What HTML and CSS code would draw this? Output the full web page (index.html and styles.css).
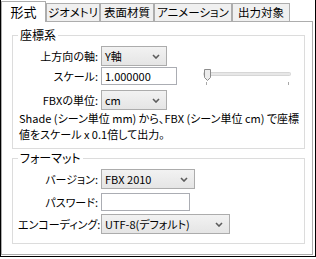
FILE: index.html
```html
<!DOCTYPE html>
<html lang="ja">
<head>
<meta charset="UTF-8">
<title>エクスポート設定</title>
<link rel="stylesheet" href="styles.css">
</head>
<body>
<div class="window">
	<div class="tabs">
		<div class="tab active t-form">形式</div>
		<div class="tab t-geo">ジオメトリ</div>
		<div class="tab t-mat">表面材質</div>
		<div class="tab t-anim">アニメーション</div>
		<div class="tab t-out">出力対象</div>
	</div>
	<div class="panel">
		<fieldset class="group coords">
			<legend>座標系</legend>
			<div class="row r-axis">
				<span class="label">上方向の軸:</span>
				<div class="select w-short"><span>Y軸</span><svg class="chev" width="8" height="5" viewBox="0 0 8 5"><polyline points="1,1 4,4 7,1"/></svg></div>
			</div>
			<div class="row r-scale">
				<span class="label">スケール:</span>
				<div class="field w-scale">1.000000</div>
				<svg class="slider" width="90" height="17" viewBox="0 0 90 17">
					<rect x="1.5" y="3.5" width="87" height="3" rx="1" fill="#e7e7e7" stroke="#d6d6d6"/>
					<polygon points="2.5,0.5 8.5,0.5 8.5,8.5 5.5,11.5 2.5,8.5" fill="#ececec" stroke="#8c8c8c"/>
					<line x1="4.5" y1="13" x2="4.5" y2="16" stroke="#a8a8a8"/>
					<line x1="86.5" y1="13" x2="86.5" y2="16" stroke="#a8a8a8"/>
				</svg>
			</div>
			<div class="row r-unit">
				<span class="label">FBXの単位:</span>
				<div class="select w-short"><span>cm</span><svg class="chev" width="8" height="5" viewBox="0 0 8 5"><polyline points="1,1 4,4 7,1"/></svg></div>
			</div>
			<p class="note">Shade (シーン単位 mm) から、FBX (シーン単位 cm) で座標<br>値をスケール x 0.1倍して出力。</p>
		</fieldset>
		<fieldset class="group format">
			<legend>フォーマット</legend>
			<div class="row r-ver">
				<span class="label">バージョン:</span>
				<div class="select w-ver"><span>FBX 2010</span><svg class="chev" width="8" height="5" viewBox="0 0 8 5"><polyline points="1,1 4,4 7,1"/></svg></div>
			</div>
			<div class="row r-pass">
				<span class="label">パスワード:</span>
				<div class="field w-pass"></div>
			</div>
			<div class="row r-enc">
				<span class="label">エンコーディング:</span>
				<div class="select w-enc"><span>UTF-8(デフォルト)</span><svg class="chev" width="8" height="5" viewBox="0 0 8 5"><polyline points="1,1 4,4 7,1"/></svg></div>
			</div>
		</fieldset>
	</div>
</div>
</body>
</html>
```

FILE: styles.css
```css
html {

	font-family: "Noto Sans CJK JP", sans-serif;
	color: #000;
}
body {

	margin: 0;
	background: #fff;
}
.window {

	width: 316px;
	height: 257px;
	box-sizing: border-box;
	border: 1px solid #000;
	border-top: 0;
	display: flex;
	flex-direction: column;
	font-size: 11px;
	line-height: 16px;
	font-feature-settings: "palt";
}

/* tabs */
.tabs {

	display: flex;
	align-items: flex-end;
	height: 21px;
	flex: none;
}
.tab {

	box-sizing: border-box;
	height: 18px;
	border: 1px solid #adadad;
	border-bottom: 0;
	background: #f0f0f0;
	text-align: center;
	line-height: 17px;
	font-size: 11.5px;
	white-space: nowrap;
}
.tab.active {

	height: 21px;
	margin-bottom: -1px;
	background: #fff;
	position: relative;
	z-index: 1;
	font-size: 13px;
	line-height: 19px;
}
.t-form { width: 45px; }
.t-geo { width: 54px; }
.t-mat { width: 54px; }
.t-anim { width: 78px; }
.t-out { width: 58px; }

/* panel */
.panel {

	flex: 1;
	border: 1px solid #adadad;
	margin: 0 2px 1px 0;
	background: #fff;
}
.group {

	margin: 6px 7px 0 10px;
	padding: 4px 5px 6px 5px;
	border: 1px solid #dcdcdc;
	min-width: 0;
}
.group legend {

	padding: 0 2px;
	line-height: 14px;
	font-size: 12px;
}
.format {

	margin-top: 2px;
	padding-bottom: 9px;
}
.row {

	display: flex;
	align-items: center;
}
.label {

	width: 80px;
	margin-right: 3px;
	text-align: right;
	white-space: nowrap;
}
.r-axis { height: 20px; margin-bottom: 1px; }
.r-scale { height: 18px; margin-bottom: 5px; align-items: flex-start; }
.r-scale .label { line-height: 18px; }
.r-unit { height: 20px; }
.r-ver { height: 20px; margin-bottom: 4px; }
.r-pass { height: 18px; margin-bottom: 3px; }
.r-enc { height: 20px; }

/* controls */
.select {

	box-sizing: border-box;
	height: 20px;
	border: 1px solid #acacac;
	background: linear-gradient(#f2f2f2, #e5e5e5);
	display: flex;
	align-items: center;
	justify-content: space-between;
	padding: 0 6px 0 3px;
	white-space: nowrap;
}
.chev polyline {

	fill: none;
	stroke: #5c5c5c;
	stroke-width: 1.6;
}
.field {

	box-sizing: border-box;
	height: 18px;
	border: 1px solid #abadb3;
	background: #fff;
	padding: 0 3px;
	line-height: 16px;
}
.w-short { width: 66px; }
.w-ver { width: 94px; }
.w-enc { width: 129px; }
.w-scale { width: 76px; }
.w-pass { width: 89px; }
.slider {

	margin: 2px 0 0 25px;
}
.note {

	margin: 0 0 0 1px;
	line-height: 16px;
	white-space: nowrap;
}
```
